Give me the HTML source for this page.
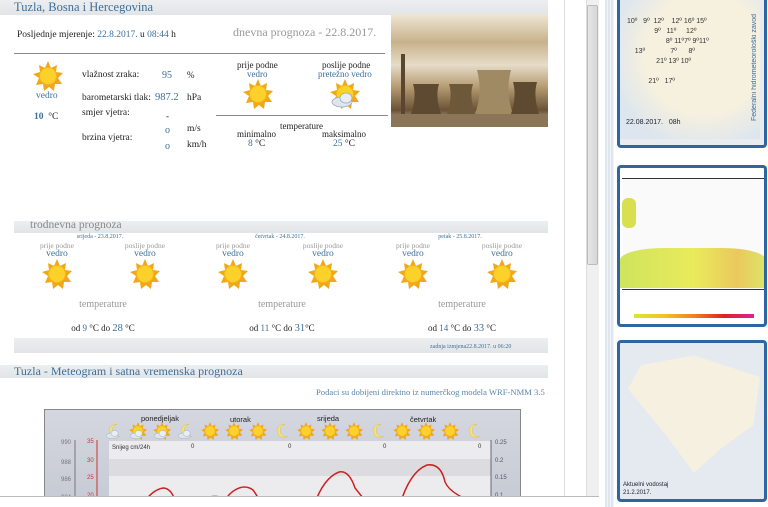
<!DOCTYPE html>
<html><head><meta charset="utf-8">
<style>
*{margin:0;padding:0;box-sizing:border-box}
body{width:768px;height:507px;overflow:hidden;background:#fff;font-family:"Liberation Serif",serif;position:relative;color:#222}
.a{position:absolute;white-space:nowrap}
.c{position:absolute;white-space:nowrap;width:120px;text-align:center}
.bar{position:absolute;background:linear-gradient(#eceef0,#e2e5e8)}
.blue{color:#3d6f9a}
.gray{color:#999}
svg.sun{position:absolute}
</style></head><body>
<svg width="0" height="0" style="position:absolute"><defs>
<g id="sun"><polygon points="15,0 18,7 24,4 23,11 30,12 25,17 29,23 22,23 21,30 16,26 11,30 10,23 3,24 6,17 0,13 7,11 6,4 12,7" fill="#f0a818"/><circle cx="15" cy="15" r="8.5" fill="#fcd22a" stroke="#f5b41e"/></g>
<g id="cloud"><ellipse cx="12" cy="23" rx="10" ry="5" fill="#dde6ee" stroke="#9ab" stroke-width=".8"/><ellipse cx="16" cy="19" rx="6" ry="5" fill="#e8eef4" stroke="#9ab" stroke-width=".8"/></g>
<g id="moon"><path d="M20 4 A11 11 0 1 0 24 24 A9 9 0 1 1 20 4 Z" fill="#f4e27a" stroke="#d8c050" stroke-width=".8"/></g>
</defs></svg>

<div class="bar" style="left:0;top:0;width:548px;height:15px"></div>
<div class="a blue" style="left:14px;top:0;font-size:12.5px">Tuzla, Bosna i Hercegovina</div>
<div class="a" style="left:17px;top:30px;font-size:9.5px">Posljednje mjerenje: <span class="blue">22.8.2017.</span> u <span class="blue">08:44</span> h</div>
<div class="a gray" style="left:233px;top:25px;font-size:12px">dnevna prognoza - 22.8.2017.</div>
<div class="a" style="left:14px;top:53px;width:371px;height:1px;background:#888"></div>
<div class="a" style="left:216px;top:115px;width:172px;height:1px;background:#888"></div>

<svg class="sun" style="left:33px;top:61px" width="30" height="30"><use href="#sun"/></svg>
<div class="a blue" style="left:36px;top:91px;font-size:9.5px">vedro</div>
<div class="a" style="left:34px;top:112px;font-size:9.5px"><b class="blue">10</b> &nbsp;°C</div>

<div class="a" style="left:82px;top:70px;font-size:9.5px">vlažnost zraka:</div>
<div class="a blue" style="left:162px;top:70px;font-size:10px">95</div><div class="a" style="left:187px;top:70px;font-size:9px">%</div>
<div class="a" style="left:82px;top:93px;font-size:9.5px">barometarski tlak:</div>
<div class="a blue" style="left:155px;top:92px;font-size:10.5px">987.2</div><div class="a" style="left:187px;top:93px;font-size:9.5px">hPa</div>
<div class="a" style="left:82px;top:108px;font-size:9.5px">smjer vjetra:</div>
<div class="a" style="left:166px;top:111px;font-size:9px">-</div>
<div class="a" style="left:82px;top:133px;font-size:9.5px">brzina vjetra:</div>
<div class="a blue" style="left:165px;top:125px;font-size:10px">o</div><div class="a" style="left:187px;top:124px;font-size:9.5px">m/s</div>
<div class="a blue" style="left:165px;top:141px;font-size:10px">o</div><div class="a" style="left:187px;top:140px;font-size:9.5px">km/h</div>

<div class="a" style="left:237px;top:60px;font-size:9px">prije podne</div>
<div class="a blue" style="left:247px;top:69px;font-size:9px">vedro</div>
<svg class="sun" style="left:243px;top:79px" width="30" height="30"><use href="#sun"/></svg>
<div class="a" style="left:322px;top:60px;font-size:9px">poslije podne</div>
<div class="a blue" style="left:318px;top:69px;font-size:9px">pretežno vedro</div>
<svg class="sun" style="left:330px;top:79px" width="30" height="30"><use href="#sun"/><use href="#cloud"/></svg>
<div class="a" style="left:280px;top:121px;font-size:9px">temperature</div>
<div class="a" style="left:237px;top:129px;font-size:9px">minimalno</div>
<div class="a blue" style="left:248px;top:139px;font-size:9.5px">8 <span style="color:#222">°C</span></div>
<div class="a" style="left:322px;top:129px;font-size:9px">maksimalno</div>
<div class="a blue" style="left:333px;top:139px;font-size:9.5px">25 <span style="color:#222">°C</span></div>

<div class="a" style="left:391px;top:14px;width:157px;height:113px;background:linear-gradient(#efe6d4 0%,#c8b28c 25%,#e6dcc8 45%,#b49a70 65%,#6a5236 85%,#d8ccb4 100%)">
<svg width="157" height="113" style="position:absolute;left:0;top:0">
<rect x="10" y="40" width="4" height="60" fill="#5a4630"/>
<path d="M22 70 Q26 82 20 100 L50 100 Q44 82 48 70 Z" fill="#5e4a30"/>
<path d="M58 70 Q62 82 56 100 L84 100 Q78 82 82 70 Z" fill="#6e583a"/>
<path d="M86 56 Q92 78 84 100 L122 100 Q114 78 120 56 Z" fill="#a08a64"/>
<path d="M122 68 Q126 82 120 100 L148 100 Q142 82 146 68 Z" fill="#5e4a30"/>
<rect x="0" y="100" width="157" height="13" fill="#8a7656"/>
</svg></div>

<div class="bar" style="left:14px;top:221px;width:534px;height:12px"></div>
<div class="a gray" style="left:30px;top:219px;font-size:11.5px;color:#888">trodnevna prognoza</div>
<div class="bar" style="left:14px;top:338px;width:534px;height:15px"></div>
<div class="a blue" style="left:430px;top:344px;font-size:6px">zadnja izmjena22.8.2017. u 06:20</div>

<div class="c blue" style="left:40px;top:234px;font-size:6px">srijeda - 23.8.2017.</div>
<div class="c blue" style="left:220px;top:234px;font-size:6px">četvrtak - 24.8.2017.</div>
<div class="c blue" style="left:400px;top:234px;font-size:6px">petak - 25.8.2017.</div>

<div class="c gray" style="left:-3px;top:241px;font-size:7.5px">prije podne</div>
<div class="c gray" style="left:85px;top:241px;font-size:7.5px">poslije podne</div>
<div class="c gray" style="left:173px;top:241px;font-size:7.5px">prije podne</div>
<div class="c gray" style="left:263px;top:241px;font-size:7.5px">poslije podne</div>
<div class="c gray" style="left:353px;top:241px;font-size:7.5px">prije podne</div>
<div class="c gray" style="left:442px;top:241px;font-size:7.5px">poslije podne</div>
<div class="c blue" style="left:-3px;top:249px;font-size:9.5px">vedro</div>
<div class="c blue" style="left:85px;top:249px;font-size:9.5px">vedro</div>
<div class="c blue" style="left:173px;top:249px;font-size:9.5px">vedro</div>
<div class="c blue" style="left:263px;top:249px;font-size:9.5px">vedro</div>
<div class="c blue" style="left:353px;top:249px;font-size:9.5px">vedro</div>
<div class="c blue" style="left:442px;top:249px;font-size:9.5px">vedro</div>
<svg class="sun" style="left:42px;top:259px" width="30" height="30"><use href="#sun"/></svg>
<svg class="sun" style="left:130px;top:259px" width="30" height="30"><use href="#sun"/></svg>
<svg class="sun" style="left:218px;top:259px" width="30" height="30"><use href="#sun"/></svg>
<svg class="sun" style="left:308px;top:259px" width="30" height="30"><use href="#sun"/></svg>
<svg class="sun" style="left:398px;top:259px" width="30" height="30"><use href="#sun"/></svg>
<svg class="sun" style="left:487px;top:259px" width="30" height="30"><use href="#sun"/></svg>
<div class="c gray" style="left:43px;top:299px;font-size:10px">temperature</div>
<div class="c gray" style="left:222px;top:299px;font-size:10px">temperature</div>
<div class="c gray" style="left:402px;top:299px;font-size:10px">temperature</div>
<div class="c" style="left:43px;top:323px;font-size:9px">od <span class="blue">9</span> °C do <span class="blue" style="font-size:10.5px">28</span> °C</div>
<div class="c" style="left:222px;top:323px;font-size:9px">od <span class="blue">11</span> °C do <span class="blue" style="font-size:10.5px">31</span>°C</div>
<div class="c" style="left:402px;top:323px;font-size:9px">od <span class="blue">14</span> °C do <span class="blue" style="font-size:10.5px">33</span> °C</div>

<div class="bar" style="left:0;top:365px;width:548px;height:13px"></div>
<div class="a blue" style="left:14px;top:364px;font-size:12px">Tuzla - Meteogram i satna vremenska prognoza</div>
<div class="a" style="left:316px;top:387px;font-size:8.6px;color:#5a86ac">Podaci su dobijeni direktno iz numerčkog modela WRF-NMM 3.5</div>

<div class="a" style="left:44px;top:409px;width:477px;height:98px;background:linear-gradient(#d4d7df,#c6cad4);border:1px solid #888;overflow:hidden">
<svg width="477" height="98" style="position:absolute;left:0;top:0;font-family:'Liberation Sans',sans-serif">
<rect x="64" y="31" width="382" height="70" fill="#ececef"/>
<rect x="64" y="49" width="382" height="17" fill="#dcdce0"/>
<text x="96" y="11" font-size="7.5" fill="#222">ponedjeljak</text>
<text x="185" y="12" font-size="7.5" fill="#222">utorak</text>
<text x="272" y="11" font-size="7.5" fill="#222">srijeda</text>
<text x="365" y="12" font-size="7.5" fill="#222">četvrtak</text>
<text x="67" y="39" font-size="6" fill="#333">Snijeg cm/24h</text>
<text x="146" y="38" font-size="6" fill="#333">0</text><text x="243" y="38" font-size="6" fill="#333">0</text><text x="338" y="38" font-size="6" fill="#333">0</text><text x="433" y="38" font-size="6" fill="#333">0</text>
<text x="16" y="34" font-size="6" fill="#777">990</text><text x="16" y="54" font-size="6" fill="#777">988</text><text x="16" y="71" font-size="6" fill="#777">986</text><text x="16" y="89" font-size="6" fill="#777">984</text>
<text x="42" y="33" font-size="6" fill="#c33">35</text><text x="42" y="52" font-size="6" fill="#c33">30</text><text x="42" y="69" font-size="6" fill="#c33">25</text><text x="42" y="87" font-size="6" fill="#c33">20</text>
<line x1="30" y1="30" x2="30" y2="98" stroke="#777"/><line x1="52" y1="30" x2="52" y2="98" stroke="#c33"/>
<line x1="446" y1="30" x2="446" y2="98" stroke="#667"/>
<text x="450" y="34" font-size="6" fill="#556">0.25</text><text x="450" y="52" font-size="6" fill="#556">0.2</text><text x="450" y="69" font-size="6" fill="#556">0.15</text><text x="450" y="87" font-size="6" fill="#556">0.1</text>
<path d="M95 98 Q106 80 118 78 Q128 78 132 98" fill="none" stroke="#c22" stroke-width="1.5"/>
<path d="M178 98 Q180 86 190 80 Q200 74 208 80 Q214 88 218 98" fill="none" stroke="#c22" stroke-width="1.5"/>
<path d="M268 98 Q278 68 294 62 Q304 60 310 78 Q318 88 326 98" fill="none" stroke="#c22" stroke-width="1.5"/>
<path d="M354 98 Q364 62 382 55 Q396 53 400 72 Q406 86 440 96" fill="none" stroke="#c22" stroke-width="1.5"/>
<path d="M156 98 Q160 86 170 86 Q178 86 180 94" fill="none" stroke="#888" stroke-width="1"/>
</svg>
<svg class="sun" style="left:60px;top:12px" width="18" height="18" viewBox="0 0 30 30"><use href="#moon"/><use href="#cloud"/></svg>
<svg class="sun" style="left:84px;top:12px" width="18" height="18" viewBox="0 0 30 30"><use href="#sun"/><use href="#cloud"/></svg>
<svg class="sun" style="left:108px;top:12px" width="18" height="18" viewBox="0 0 30 30"><use href="#sun"/><use href="#cloud"/></svg>
<svg class="sun" style="left:132px;top:12px" width="18" height="18" viewBox="0 0 30 30"><use href="#moon"/><use href="#cloud"/></svg>
<svg class="sun" style="left:156px;top:12px" width="18" height="18" viewBox="0 0 30 30"><use href="#sun"/></svg>
<svg class="sun" style="left:180px;top:12px" width="18" height="18" viewBox="0 0 30 30"><use href="#sun"/></svg>
<svg class="sun" style="left:204px;top:12px" width="18" height="18" viewBox="0 0 30 30"><use href="#sun"/></svg>
<svg class="sun" style="left:228px;top:12px" width="18" height="18" viewBox="0 0 30 30"><use href="#moon"/></svg>
<svg class="sun" style="left:252px;top:12px" width="18" height="18" viewBox="0 0 30 30"><use href="#sun"/></svg>
<svg class="sun" style="left:276px;top:12px" width="18" height="18" viewBox="0 0 30 30"><use href="#sun"/></svg>
<svg class="sun" style="left:300px;top:12px" width="18" height="18" viewBox="0 0 30 30"><use href="#sun"/></svg>
<svg class="sun" style="left:324px;top:12px" width="18" height="18" viewBox="0 0 30 30"><use href="#moon"/></svg>
<svg class="sun" style="left:348px;top:12px" width="18" height="18" viewBox="0 0 30 30"><use href="#sun"/></svg>
<svg class="sun" style="left:372px;top:12px" width="18" height="18" viewBox="0 0 30 30"><use href="#sun"/></svg>
<svg class="sun" style="left:396px;top:12px" width="18" height="18" viewBox="0 0 30 30"><use href="#sun"/></svg>
<svg class="sun" style="left:420px;top:12px" width="18" height="18" viewBox="0 0 30 30"><use href="#moon"/></svg>
</div>

<div class="a" style="left:0;top:496px;width:600px;height:11px;background:#fff;border-top:1px solid #bbb"></div>

<div class="a" style="left:564px;top:0;width:1px;height:496px;background:#ddd"></div>
<div class="a" style="left:586px;top:0;width:13px;height:496px;background:#f0f0f0;border-left:1px solid #ddd"></div>
<div class="a" style="left:587px;top:5px;width:11px;height:260px;background:linear-gradient(90deg,#e6e6e6,#d6d6d6);border:1px solid #bbb;border-radius:2px"></div>
<div class="a" style="left:599px;top:0;width:6px;height:507px;background:#fff"></div>
<div class="a" style="left:605px;top:0;width:9px;height:507px;background:repeating-linear-gradient(90deg,#dfe6ef 0 2px,#f2f5f8 2px 3px)"></div>

<div class="a" style="left:617px;top:-4px;width:150px;height:152px;border:3px solid #2f65a0;border-radius:4px;background:#e8ecef;overflow:hidden">
<div style="position:absolute;left:0;top:0;width:140px;height:140px;background:radial-gradient(ellipse at 60% 40%,#f6f0df 50%,#dde6ee 80%)"></div>
<div style="position:absolute;left:6px;top:120px;font:7px 'Liberation Sans',sans-serif;color:#223">22.08.2017.&nbsp;&nbsp;&nbsp;08h</div>
<div style="position:absolute;left:131px;top:15px;font:7px 'Liberation Sans',sans-serif;color:#3a6aa0;writing-mode:vertical-rl;transform:rotate(180deg)">Federalni hidrometeorološki zavod</div>
<div style="position:absolute;left:7px;top:18px;font:7px 'Liberation Sans',sans-serif;color:#333;line-height:10px">10º&nbsp;&nbsp;&nbsp;9º&nbsp;&nbsp;12º&nbsp;&nbsp;&nbsp;&nbsp;12º 16º 15º<br>&nbsp;&nbsp;&nbsp;&nbsp;&nbsp;&nbsp;&nbsp;&nbsp;&nbsp;&nbsp;&nbsp;&nbsp;&nbsp;&nbsp;9º&nbsp;&nbsp;&nbsp;11º&nbsp;&nbsp;&nbsp;&nbsp;&nbsp;12º<br>&nbsp;&nbsp;&nbsp;&nbsp;&nbsp;&nbsp;&nbsp;&nbsp;&nbsp;&nbsp;&nbsp;&nbsp;&nbsp;&nbsp;&nbsp;&nbsp;&nbsp;&nbsp;&nbsp;&nbsp;8º 11º7º 9º11º<br>&nbsp;&nbsp;&nbsp;&nbsp;13º&nbsp;&nbsp;&nbsp;&nbsp;&nbsp;&nbsp;&nbsp;&nbsp;&nbsp;&nbsp;&nbsp;&nbsp;&nbsp;7º&nbsp;&nbsp;&nbsp;&nbsp;&nbsp;&nbsp;8º<br>&nbsp;&nbsp;&nbsp;&nbsp;&nbsp;&nbsp;&nbsp;&nbsp;&nbsp;&nbsp;&nbsp;&nbsp;&nbsp;&nbsp;&nbsp;21º 13º 10º<br><br>&nbsp;&nbsp;&nbsp;&nbsp;&nbsp;&nbsp;&nbsp;&nbsp;&nbsp;&nbsp;&nbsp;21º&nbsp;&nbsp;&nbsp;17º</div>
</div>
<div class="a" style="left:617px;top:165px;width:150px;height:162px;border:3px solid #2f65a0;border-radius:4px;background:#fff;overflow:hidden">
<div style="position:absolute;left:2px;top:10px;width:142px;height:112px;border-top:1px solid #333;border-bottom:1px solid #333;background:#fafafa"></div>
<div style="position:absolute;left:2px;top:30px;width:14px;height:30px;background:#d8e050;border-radius:6px"></div>
<div style="position:absolute;left:0;top:80px;width:146px;height:40px;background:linear-gradient(90deg,#c8e040,#e6e840 50%,#e8c040 80%,#d8e050);border-radius:30% 30% 0 0;opacity:.85"></div>
<div style="position:absolute;left:14px;top:146px;width:120px;height:4px;background:linear-gradient(90deg,#d8e830,#f8c020,#f08020,#e02020,#e020a0)"></div>
</div>
<div class="a" style="left:617px;top:340px;width:150px;height:162px;border:3px solid #2f65a0;border-radius:4px;background:#e4eaf0;overflow:hidden">
<div style="position:absolute;left:8px;top:10px;width:132px;height:120px;background:#f6f0e0;clip-path:polygon(10% 10%,50% 2%,100% 20%,95% 60%,70% 80%,50% 100%,30% 70%,0 30%)"></div>
<div style="position:absolute;left:3px;top:138px;font:6px 'Liberation Sans',sans-serif;color:#223;line-height:8px">Aktuelni vodostaj<br>21.2.2017.</div>
</div>
</body></html>
